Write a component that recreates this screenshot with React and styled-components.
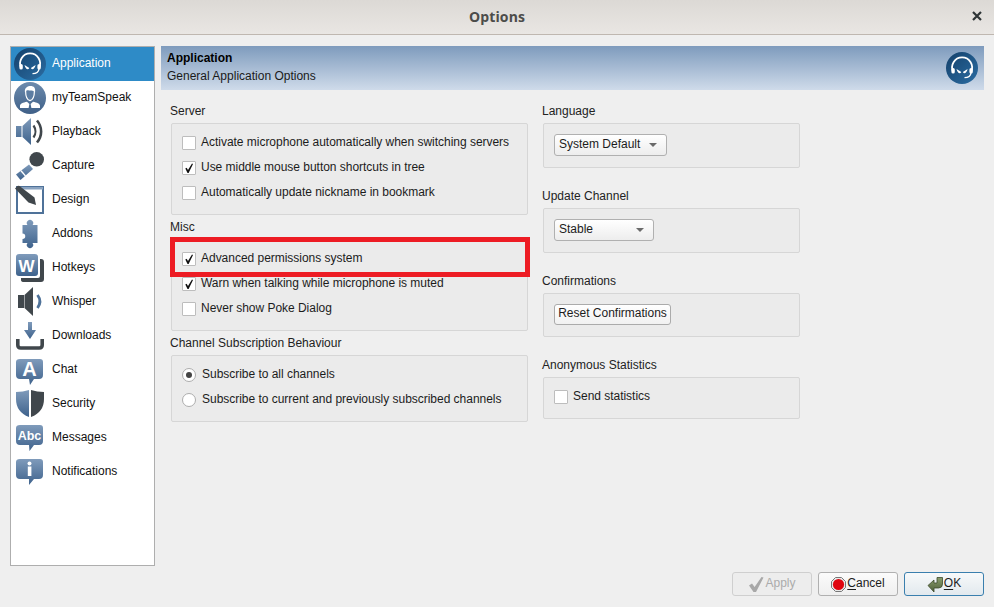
import React from 'react';
import styled, { createGlobalStyle } from 'styled-components';

const Global = createGlobalStyle`
  html, body { margin: 0; padding: 0; background: #efefef; }
  body { font-family: "Liberation Sans", Arial, sans-serif; font-size: 12px; color: #1a1a1a; }
`;

const Window = styled.div`
  width: 994px; height: 607px; display: flex; flex-direction: column; overflow: hidden; position: relative;
  background: #efefef;
`;
const TitleBar = styled.header`
  height: 34px; flex: none; display: flex; align-items: center; justify-content: center; position: relative;
  background: linear-gradient(#dcd9d5, #e9e6e3);
  border-bottom: 1px solid #bfb7b0;
`;
const Title = styled.h1`
  margin: 0; padding-bottom: 2px; font: bold 14px "Open Sans", sans-serif; color: #4c4c4a; letter-spacing: .15px;
`;
const CloseButton = styled.button`
  position: absolute; right: 11px; top: 10px; width: 12px; height: 12px; padding: 0; border: 0; background: none; display: block;
  svg { display: block; }
`;
const Main = styled.div`
  flex: 1; display: flex; gap: 6px; padding: 11px 10px 0; min-height: 0;
`;
const Sidebar = styled.nav`
  width: 145px; height: 520px; flex: none; box-sizing: border-box; background: #fff; border: 1px solid #aeaeae;
`;
const NavItem = styled.div`
  height: 34px; display: flex; align-items: center; gap: 6px; padding-left: 3px;
  background: ${p => (p.$active ? '#2e8bc7' : 'transparent')};
  color: ${p => (p.$active ? '#fff' : '#111')};
  svg { flex: none; display: block; }
  span { padding-bottom: 2px; }
`;
const Panel = styled.div`
  flex: 1; display: flex; flex-direction: column; min-width: 0;
`;
const Banner = styled.div`
  height: 44px; flex: none; box-sizing: border-box; display: flex; justify-content: space-between; align-items: center;
  padding: 0 6px; background: linear-gradient(#7e9bbd, #cfdbea);
`;
const BannerText = styled.div`
  display: flex; flex-direction: column; gap: 4px; line-height: 14px; padding-bottom: 2px;
  strong { color: #000; }
`;
const Columns = styled.div`
  display: flex; gap: 12px; padding: 13px 0 0 9px;
`;
const Column = styled.div`
  width: ${p => p.$w}px; display: flex; flex-direction: column; gap: ${p => p.$gap}px;
`;
const Section = styled.section`
  display: flex; flex-direction: column; gap: 6px;
`;
const SectionLabel = styled.div`
  height: 14px; line-height: 16px; color: #222;
`;
const GroupBox = styled.div`
  margin-left: 1px; box-sizing: border-box; height: ${p => p.$h}px; width: ${p => p.$w}px;
  padding: ${p => p.$pad || '6px 10px'};
  background: #ebebeb; border: 1px solid #d6d6d6; border-radius: 2px;
`;
const Row = styled.div`
  height: 25px; display: flex; align-items: center; gap: ${p => p.$gap || 5}px; color: #1c1c1c; letter-spacing: -.025px;
  span { padding-bottom: 2px; }
`;
const CheckBox = styled.div`
  width: 14px; height: 14px; box-sizing: border-box; flex: none; background: #fff; border: 1px solid #bdbdbd; border-radius: 1px;
  display: flex; align-items: center; justify-content: center;
  svg { display: block; }
`;
const Radio = styled.div`
  width: 14px; height: 14px; box-sizing: border-box; flex: none; background: #fff; border: 1px solid #adadad; border-radius: 50%;
  display: flex; align-items: center; justify-content: center;
  &::after { content: ""; width: 6px; height: 6px; border-radius: 50%; background: ${p => (p.$on ? '#444' : 'transparent')}; }
`;
const Highlight = styled.div`
  position: absolute; left: 170px; top: 237px; width: 360px; height: 40px; box-sizing: border-box; border: 5px solid #ed1c24; pointer-events: none;
`;
const Select = styled.div`
  width: ${p => p.$w}px; height: 22px; box-sizing: border-box; display: flex; align-items: center; justify-content: space-between;
  padding: 0 9px 0 4px; border: 1px solid #b0b0b0; border-radius: 3px; background: linear-gradient(#fff, #ededed); color: #1c1c1c;
  span { padding-bottom: 2px; }
  &::after { content: ""; border: 4px solid transparent; border-top: 4px solid #6a6a6a; border-bottom: 0; }
`;
const PlainButton = styled.div`
  width: 117px; height: 21px; box-sizing: border-box; display: flex; align-items: center; justify-content: center;
  border: 1px solid #ababab; border-radius: 3px; background: linear-gradient(#fff, #f1f1f1); color: #1c1c1c;
  span { padding-bottom: 4px; }
`;
const Footer = styled.footer`
  flex: none; display: flex; justify-content: flex-end; gap: 6px; padding: 0 10px 11px;
`;
const DialogButton = styled.div`
  width: 80px; height: 24px; box-sizing: border-box; display: flex; align-items: center; justify-content: center; gap: ${p => (p.$off ? 0 : 1)}px;
  border-radius: 3px; border: 1px solid ${p => (p.$primary ? '#3a7fae' : p.$off ? '#cfcfcf' : '#b0b0b0')};
  background: ${p => (p.$primary ? 'linear-gradient(#f7f9fa, #e2e9ee)' : p.$off ? '#ededed' : 'linear-gradient(#fbfbfb, #efefef)')};
  color: ${p => (p.$off ? '#ababab' : '#1c1c1c')};
  svg { flex: none; display: block; }
  u { text-decoration-thickness: 1px; text-underline-offset: 2px; }
  span { padding-bottom: 2px; }
`;
const HiddenDefs = styled.svg`
  position: absolute; width: 0; height: 0;
`;
const IconText = styled.text`
  font-family: "Liberation Sans", sans-serif; font-weight: bold; fill: #fff; text-anchor: middle;
`;

const Defs = () => (
  <HiddenDefs aria-hidden="true">
    <defs>
      <linearGradient id="blue" x1="0" y1="0" x2="0" y2="1">
        <stop offset="0" stopColor="#7f9bbb" />
        <stop offset="1" stopColor="#3e628c" />
      </linearGradient>
      <linearGradient id="disc" x1="0" y1="0" x2="1" y2="1">
        <stop offset="0" stopColor="#14406a" />
        <stop offset="1" stopColor="#2b6da3" />
      </linearGradient>
      <linearGradient id="person" x1="0" y1="0" x2="0" y2="1">
        <stop offset="0" stopColor="#6d8bad" />
        <stop offset="1" stopColor="#3f6088" />
      </linearGradient>
      <linearGradient id="olive" x1="0" y1="0" x2="0" y2="1">
        <stop offset="0" stopColor="#8a9e6c" />
        <stop offset="1" stopColor="#4f5f3a" />
      </linearGradient>
    </defs>
  </HiddenDefs>
);

const Ico = ({ children, size = 32 }) => (
  <svg width={size} height={size} viewBox="0 0 32 32" aria-hidden="true">{children}</svg>
);

const Headset = () => (
  <Ico>
    <circle cx="16" cy="16" r="16" fill="url(#disc)" />
    <path d="M7.2 20 A10 10 0 1 1 25 20" fill="none" stroke="#fff" strokeWidth="1.8" />
    <rect x="5.4" y="16" width="3.4" height="5.6" rx="1.7" fill="#fff" />
    <rect x="23.4" y="16" width="3.4" height="5.6" rx="1.7" fill="#fff" />
    <path d="M10.5 17 L15.3 20 C14 22.4 11.4 21 10.5 17Z M21.6 17 L16.9 20 C18 22.4 20.8 21 21.6 17Z" fill="#fff" />
    <path d="M25 21 C24.6 24.2 22 25.6 18.5 25.6" fill="none" stroke="#fff" strokeWidth="1.4" />
  </Ico>
);
const Person = () => (
  <Ico>
    <circle cx="16" cy="16" r="16" fill="url(#person)" />
    <path d="M11.6 9 C11.6 14 13 18 16 18.6 C19 18 20.4 14 20.4 9" fill="#5d7da2" stroke="#fff" strokeWidth="1.2" />
    <path d="M11 10.5 C10 5.5 14 4 16.5 4 C20 4 21.8 6 21 10.5 C20 8 17.5 8.6 15 8.4 C13 8.2 12 8.6 11 10.5Z" fill="#fff" />
    <path d="M6 26 V24 C6 21.5 9 20.8 13 19.8 L15.4 22 L14.6 26 Z M26 26 V24 C26 21.5 23 20.8 19 19.8 L16.6 22 L17.4 26 Z" fill="#fff" />
  </Ico>
);
const Playback = () => (
  <Ico>
    <path d="M2 10 h5.5 v11 H2Z M8.5 10 L17 2 V29 L8.5 21Z" fill="url(#blue)" />
    <path d="M19.5 9.5 C22 13 22 18 19.5 21.5" fill="none" stroke="#40474c" strokeWidth="2.2" />
    <path d="M23 4.5 C28.5 11 28.5 20 23 26.5" fill="none" stroke="#40474c" strokeWidth="2.6" />
  </Ico>
);
const Capture = () => (
  <Ico>
    <circle cx="22.7" cy="9.3" r="7.3" fill="#40474c" />
    <path d="M2 24.5 L15 14.5 L19 19 L6.5 30 Z" fill="url(#blue)" />
    <path d="M7 20.8 L11.5 26" stroke="#fff" strokeWidth="1.3" />
  </Ico>
);
const Design = () => (
  <Ico>
    <rect x="3" y="3" width="26" height="26" fill="#fff" stroke="#4f7299" strokeWidth="2" />
    <rect x="6" y="3" width="23" height="2.5" fill="#8aa3c0" />
    <path d="M1 4.5 L3.5 2 Q4.5 1.5 5.5 2 L20.5 13.5 L22 21 L14.5 18.5 Z" fill="#40474c" />
  </Ico>
);
const Addons = () => (
  <Ico>
    <path d="M8.5 7 H13.5 A3.2 3.2 0 1 1 18.5 7 H23.5 V25 H18.5 A3.2 3.2 0 1 1 13.5 25 H8.5 V21 A2.7 2.7 0 1 0 8.5 15.5 V13 Z" fill="url(#blue)" />
  </Ico>
);
const Hotkeys = () => (
  <Ico>
    <path d="M26 7 H27 Q30 7 30 10 V27 Q30 30 27 30 H10 Q7 30 7 28 V26 H24 Q26 26 26 24Z" fill="#40474c" />
    <rect x="2" y="2" width="22" height="22" rx="3" fill="url(#blue)" />
    <IconText x="12.5" y="20" fontSize="17">W</IconText>
  </Ico>
);
const Whisper = () => (
  <Ico>
    <path d="M4 9 h6 v13 H4Z M10.5 9 L19 1 V30 L10.5 22Z" fill="#40474c" />
    <path d="M23.5 9 C26.5 13 26.5 18 23.5 22" fill="none" stroke="#4f7299" strokeWidth="2.8" />
  </Ico>
);
const Downloads = () => (
  <Ico>
    <path d="M3.8 19 V25 Q3.8 28 6.8 28 H25.2 Q28.2 28 28.2 25 V19" fill="none" stroke="#40474c" strokeWidth="3.6" />
    <path d="M14 2 H18 V10 H22 L16 19 L10 10 H14Z" fill="url(#blue)" />
  </Ico>
);
const bubble = 'M6 5 H26 Q29 5 29 8 V21 Q29 25 25 25 H20 L16 31 L15 25 H6 Q2 25 2 21 V8 Q2 5 6 5Z';
const Chat = () => (
  <Ico>
    <path d={bubble} fill="url(#blue)" />
    <IconText x="15.5" y="22" fontSize="20">A</IconText>
  </Ico>
);
const Security = () => (
  <Ico>
    <path d="M2 4 Q9 4 15 2 V29 Q2 24 2 11Z" fill="url(#blue)" />
    <path d="M17 2 Q23 4 30 4 V11 Q30 24 17 29Z" fill="#40474c" />
  </Ico>
);
const Messages = () => (
  <Ico>
    <path d="M6 3 H26 Q29 3 29 6 V19 Q29 23 25 23 H20 L15.5 29 L15 23 H6 Q2 23 2 19 V6 Q2 3 6 3Z" fill="url(#blue)" />
    <IconText x="15.5" y="17.5" fontSize="12.5">Abc</IconText>
  </Ico>
);
const Notifications = () => (
  <Ico>
    <path d="M6 3 H26 Q29 3 29 6 V19 Q29 23 25 23 H20 L15 29 L15 23 H6 Q2 23 2 19 V6 Q2 3 6 3Z" fill="url(#blue)" />
    <circle cx="15.5" cy="7.5" r="2" fill="#fff" />
    <rect x="13.8" y="10.5" width="3.6" height="9.5" fill="#fff" />
  </Ico>
);

const Tick = () => (
  <svg width="12" height="12" viewBox="0 0 12 12" aria-hidden="true">
    <path d="M2.3 6.6 L3.6 5.8 L5 8 L9 1.5 L10 2 L5.6 11 H4.5 Z" fill="#111" />
  </svg>
);
const BigCheck = () => (
  <svg width="17" height="17" viewBox="0 0 17 17" aria-hidden="true">
    <path d="M1 9.5 L4 7.5 L6.6 11 L13.5 1 L15.5 1.5 L8 16 H5.5 Z" fill="#a8a8a8" />
  </svg>
);
const Stop = () => (
  <svg width="15" height="15" viewBox="0 0 15 15" aria-hidden="true">
    <path d="M4.5 .5 H10.5 L14.5 4.5 V10.5 L10.5 14.5 H4.5 L.5 10.5 V4.5 Z" fill="#e8e8e8" stroke="#777" />
    <circle cx="7.5" cy="7.5" r="5.6" fill="#e0050f" />
  </svg>
);
const Enter = () => (
  <svg width="16" height="17" viewBox="0 0 16 17" aria-hidden="true">
    <path d="M1 9.5 L7 4 V7 H10 V1.5 H15.5 V8 Q15.5 12 11.5 12 H7 V16 Z" fill="url(#olive)" stroke="#3d4a2c" strokeWidth=".8" />
  </svg>
);

const nav = [
  ['Application', Headset], ['myTeamSpeak', Person], ['Playback', Playback], ['Capture', Capture],
  ['Design', Design], ['Addons', Addons], ['Hotkeys', Hotkeys], ['Whisper', Whisper],
  ['Downloads', Downloads], ['Chat', Chat], ['Security', Security], ['Messages', Messages], ['Notifications', Notifications],
];

const Check = ({ on, children, gap }) => (
  <Row $gap={gap}>
    <CheckBox>{on && <Tick />}</CheckBox>
    <span>{children}</span>
  </Row>
);
const Choice = ({ on, children }) => (
  <Row $gap={6}>
    <Radio $on={on} />
    <span>{children}</span>
  </Row>
);

export default function App() {
  return (
    <Window>
      <Global />
      <Defs />
      <TitleBar>
        <Title>Options</Title>
        <CloseButton aria-label="Close">
          <svg width="12" height="12" viewBox="0 0 12 12" aria-hidden="true">
            <path d="M2 2 L10 10 M10 2 L2 10" stroke="#2e3436" strokeWidth="2.2" />
          </svg>
        </CloseButton>
      </TitleBar>
      <Main>
        <Sidebar>
          {nav.map(([label, Icon], i) => (
            <NavItem key={label} $active={i === 0}>
              <Icon />
              <span>{label}</span>
            </NavItem>
          ))}
        </Sidebar>
        <Panel>
          <Banner>
            <BannerText>
              <strong>Application</strong>
              <span>General Application Options</span>
            </BannerText>
            <Headset />
          </Banner>
          <Columns>
            <Column $w={360} $gap={4}>
              <Section>
                <SectionLabel>Server</SectionLabel>
                <GroupBox $w={357} $h={92}>
                  <Check>Activate microphone automatically when switching servers</Check>
                  <Check on>Use middle mouse button shortcuts in tree</Check>
                  <Check>Automatically update nickname in bookmark</Check>
                </GroupBox>
              </Section>
              <Section>
                <SectionLabel>Misc</SectionLabel>
                <GroupBox $w={357} $h={92}>
                  <Check on>Advanced permissions system</Check>
                  <Check on>Warn when talking while microphone is muted</Check>
                  <Check>Never show Poke Dialog</Check>
                </GroupBox>
              </Section>
              <Section>
                <SectionLabel>Channel Subscription Behaviour</SectionLabel>
                <GroupBox $w={357} $h={67}>
                  <Choice on>Subscribe to all channels</Choice>
                  <Choice>Subscribe to current and previously subscribed channels</Choice>
                </GroupBox>
              </Section>
            </Column>
            <Column $w={258} $gap={20}>
              <Section>
                <SectionLabel>Language</SectionLabel>
                <GroupBox $w={257} $h={45} $pad="10px 10px">
                  <Select $w={113}><span>System Default</span></Select>
                </GroupBox>
              </Section>
              <Section>
                <SectionLabel>Update Channel</SectionLabel>
                <GroupBox $w={257} $h={45} $pad="10px 10px">
                  <Select $w={100}><span>Stable</span></Select>
                </GroupBox>
              </Section>
              <Section>
                <SectionLabel>Confirmations</SectionLabel>
                <GroupBox $w={257} $h={44} $pad="10px 10px">
                  <PlainButton><span>Reset Confirmations</span></PlainButton>
                </GroupBox>
              </Section>
              <Section>
                <SectionLabel>Anonymous Statistics</SectionLabel>
                <GroupBox $w={257} $h={42} $pad="6px 10px">
                  <Check>Send statistics</Check>
                </GroupBox>
              </Section>
            </Column>
          </Columns>
        </Panel>
      </Main>
      <Footer>
        <DialogButton $off><BigCheck /><span>Apply</span></DialogButton>
        <DialogButton><Stop /><span><u>C</u>ancel</span></DialogButton>
        <DialogButton $primary><Enter /><span><u>O</u>K</span></DialogButton>
      </Footer>
      <Highlight />
    </Window>
  );
}
